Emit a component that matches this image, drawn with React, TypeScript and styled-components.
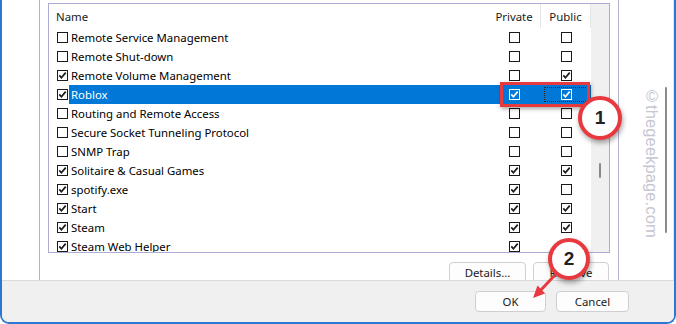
import React from "react";
import styled, { createGlobalStyle } from "styled-components";

const GlobalStyle = createGlobalStyle`
  html, body { margin: 0; padding: 0; background: #ffffff; overflow: hidden; }
  body { font-family: "Noto Sans", "Open Sans", sans-serif; color: #000; }
`;

type Rule = { name: string; on: boolean; priv: boolean; pub: boolean };

const rules: Rule[] = [
  { name: "Remote Service Management", on: false, priv: false, pub: false },
  { name: "Remote Shut-down", on: false, priv: false, pub: false },
  { name: "Remote Volume Management", on: true, priv: false, pub: true },
  { name: "Roblox", on: true, priv: true, pub: true },
  { name: "Routing and Remote Access", on: false, priv: false, pub: false },
  { name: "Secure Socket Tunneling Protocol", on: false, priv: false, pub: false },
  { name: "SNMP Trap", on: false, priv: false, pub: false },
  { name: "Solitaire & Casual Games", on: true, priv: true, pub: true },
  { name: "spotify.exe", on: true, priv: true, pub: false },
  { name: "Start", on: true, priv: true, pub: true },
  { name: "Steam", on: true, priv: true, pub: true },
  { name: "Steam Web Helper", on: true, priv: true, pub: true },
];

const SELECTED = 3;

const Stage = styled.div`
  position: relative;
  width: 676px;
  height: 324px;
  overflow: hidden;
`;

const Window = styled.div`
  width: 676px;
  height: 324px;
  box-sizing: border-box;
  border: 2px solid #2a78d2;
  border-top: none;
  border-radius: 0 0 9px 9px;
  display: flex;
  flex-direction: column;
  overflow: hidden;
  background: #ffffff;
`;

const Body = styled.div`
  height: 280px;
  flex-shrink: 0;
  display: flex;
`;

const Gutter = styled.div`
  width: 37px;
  flex-shrink: 0;
`;

const TabPage = styled.div`
  width: 562px;
  flex-shrink: 0;
  border-left: 1px solid #b3b3d4;
  border-right: 1px solid #b3b3d4;
  padding: 3px 8px 0 8px;
  box-sizing: content-box;
  display: flex;
  flex-direction: column;
  overflow: hidden;
`;

const ListBox = styled.div`
  height: 248px;
  flex-shrink: 0;
  border: 1px solid #acacd4;
  display: flex;
  overflow: hidden;
`;

const Table = styled.div`
  flex: 1;
  display: flex;
  flex-direction: column;
  overflow: hidden;
`;

const HeaderRow = styled.div`
  height: 24px;
  display: flex;
  flex-shrink: 0;
`;

const HeadCell = styled.div<{ $w?: number; $center?: boolean }>`
  ${(p) => (p.$w ? `width: ${p.$w}px; flex-shrink: 0;` : "flex: 1;")}
  box-sizing: border-box;
  display: flex;
  align-items: center;
  justify-content: ${(p) => (p.$center ? "center" : "flex-start")};
  padding-left: ${(p) => (p.$center ? 0 : 7)}px;
  font-size: 11.4px;
  color: #1a1a1a;
  border-right: 1px solid ${(p) => (p.$w ? "#e5e5e5" : "transparent")};
`;

const Row = styled.div`
  height: 19px;
  display: flex;
  align-items: center;
  flex-shrink: 0;
`;

const CheckSlot = styled.div`
  width: 20px;
  flex-shrink: 0;
  padding-left: 8px;
  box-sizing: border-box;
  display: flex;
  align-items: center;
`;

const RowBody = styled.div<{ $selected: boolean }>`
  flex: 1;
  height: 19px;
  display: flex;
  align-items: center;
  background: ${(p) => (p.$selected ? "#0078d7" : "transparent")};
  color: ${(p) => (p.$selected ? "#ffffff" : "#000000")};
`;

const NameText = styled.div`
  flex: 1;
  padding-left: 2px;
  font-size: 11.4px;
  white-space: nowrap;
`;

const Cell = styled.div<{ $w: number; $focus?: boolean }>`
  width: ${(p) => p.$w}px;
  flex-shrink: 0;
  height: 19px;
  box-sizing: border-box;
  display: flex;
  align-items: center;
  justify-content: center;
  position: relative;
  &::after {
    content: "";
    display: ${(p) => (p.$focus ? "block" : "none")};
    position: absolute;
    left: 3px;
    right: 3px;
    top: 2px;
    bottom: 2px;
    border: 1px dotted #2a2416;
  }
`;

const ScrollTrack = styled.div`
  width: 18px;
  flex-shrink: 0;
  background: #f0f0f0;
  display: flex;
  justify-content: center;
  padding-top: 159px;
  box-sizing: border-box;
`;

const Thumb = styled.div<{ $h: number }>`
  width: 2px;
  height: ${(p) => p.$h}px;
  background: #8a8a8a;
  border-radius: 1px;
`;

const ButtonRow = styled.div`
  display: flex;
  justify-content: flex-end;
  gap: 7px;
  padding-top: 9px;
  padding-right: 1px;
`;

const Button = styled.button<{ $w: number }>`
  width: ${(p) => p.$w}px;
  height: 22px;
  flex-shrink: 0;
  border: 1px solid #d0d0d0;
  border-radius: 4px;
  background: #fdfdfd;
  font-family: "Noto Sans", "Open Sans", sans-serif;
  font-size: 11.4px;
  color: #1a1a1a;
  padding: 0;
  line-height: 18px;
`;

const Side = styled.div`
  flex: 1;
  display: flex;
  justify-content: flex-end;
`;

const Watermark = styled.div`
  writing-mode: vertical-rl;
  font-family: "Liberation Sans", Arial, sans-serif;
  font-size: 16.5px;
  color: #c6c6d2;
  padding-top: 87px;
  margin-right: 1px;
  letter-spacing: 0.1px;
`;

const OuterTrack = styled.div`
  width: 12px;
  display: flex;
  justify-content: flex-start;
  padding-top: 87px;
  padding-left: 3px;
  box-sizing: border-box;
  border-right: 1px solid #e6e6e6;
`;

const Footer = styled.div`
  flex: 1;
  background: #f0f0f0;
  border-top: 1px solid #dadada;
  display: flex;
  justify-content: flex-end;
  align-items: flex-start;
  gap: 10px;
  padding: 10px 45px 0 0;
`;

const FooterButton = styled(Button)`
  height: 21px;
  border-color: #cfcfcf;
`;

const Highlight = styled.div`
  position: absolute;
  left: 500px;
  top: 82px;
  width: 90px;
  height: 25px;
  box-sizing: border-box;
  border: 3px solid #e8393f;
  box-shadow: 1px 2px 4px rgba(0, 0, 0, 0.35);
`;

const Badge = styled.div<{ $x: number; $y: number; $r: number }>`
  position: absolute;
  left: ${(p) => p.$x - p.$r}px;
  top: ${(p) => p.$y - p.$r}px;
  width: ${(p) => p.$r * 2}px;
  height: ${(p) => p.$r * 2}px;
  box-sizing: border-box;
  border-radius: 50%;
  border: 4px solid #e8393f;
  background: #ffffff;
  box-shadow: 1px 3px 5px rgba(0, 0, 0, 0.35);
  display: flex;
  align-items: center;
  justify-content: center;
  font-family: "Liberation Sans", Arial, sans-serif;
  font-weight: 700;
  font-size: 19px;
  color: #222222;
`;

const ArrowLayer = styled.svg`
  position: absolute;
  left: 0;
  top: 0;
  pointer-events: none;
`;

const CheckBox = ({ checked, light }: { checked: boolean; light?: boolean }) => {
  const c = light ? "#ffffff" : "#1a1a1a";
  return (
    <svg width="11" height="11" viewBox="0 0 11 11">
      <rect x="0.5" y="0.5" width="10" height="10" fill="none" stroke={c} strokeWidth="1" />
      {checked && (
        <path d="M2.3 5.4 L4.4 7.8 L8.7 2.6" fill="none" stroke={c} strokeWidth="1.7" strokeLinejoin="miter" />
      )}
    </svg>
  );
};

const App = () => {
  return (
    <Stage>
      <GlobalStyle />
      <Window>
        <Body>
          <Gutter />
          <TabPage>
            <ListBox>
              <Table>
                <HeaderRow>
                  <HeadCell>Name</HeadCell>
                  <HeadCell $w={53} $center>Private</HeadCell>
                  <HeadCell $w={50} $center>Public</HeadCell>
                </HeaderRow>
                {rules.map((r, i) => {
                  const sel = i === SELECTED;
                  return (
                    <Row key={r.name}>
                      <CheckSlot>
                        <CheckBox checked={r.on} />
                      </CheckSlot>
                      <RowBody $selected={sel}>
                        <NameText>{r.name}</NameText>
                        <Cell $w={53}>
                          <CheckBox checked={r.priv} light={sel} />
                        </Cell>
                        <Cell $w={50} $focus={sel}>
                          <CheckBox checked={r.pub} light={sel} />
                        </Cell>
                      </RowBody>
                    </Row>
                  );
                })}
              </Table>
              <ScrollTrack>
                <Thumb $h={15} />
              </ScrollTrack>
            </ListBox>
            <ButtonRow>
              <Button $w={77}>Details...</Button>
              <Button $w={76}>Remove</Button>
            </ButtonRow>
          </TabPage>
          <Side>
            <Watermark>©thegeekpage.com</Watermark>
            <OuterTrack>
              <Thumb $h={146} />
            </OuterTrack>
          </Side>
        </Body>
        <Footer>
          <FooterButton $w={71}>OK</FooterButton>
          <FooterButton $w={73}>Cancel</FooterButton>
        </Footer>
      </Window>

      <Highlight />
      <Badge $x={600} $y={118} $r={22}>1</Badge>
      <Badge $x={569} $y={259} $r={21}>2</Badge>
      <ArrowLayer width="676" height="324" viewBox="0 0 676 324">
        <line x1="554" y1="276" x2="540" y2="291" stroke="#e8393f" strokeWidth="3" strokeLinecap="round" />
        <polygon points="533,298 545,293.5 537.5,285.5" fill="#e8393f" />
      </ArrowLayer>
    </Stage>
  );
};

export default App;
